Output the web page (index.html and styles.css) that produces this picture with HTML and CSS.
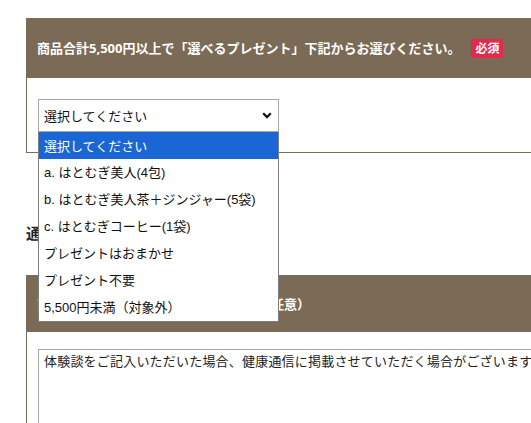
FILE: index.html
```html
<!DOCTYPE html>
<html lang="ja">
<head>
    <meta charset="UTF-8">
    <title>ご注文フォーム</title>
    <link rel="stylesheet" href="styles.css">
</head>
<body>
    <div class="page">
        <section class="field">
            <div class="field-head">
                商品合計5,500円以上で「選べるプレゼント」下記からお選びください。<span class="badge">必須</span>
            </div>
            <div class="field-body">
                <div class="picker">
                    <div class="picker-box">
                        <span>選択してください</span>
                        <svg class="chevron" width="10" height="7" viewBox="0 0 10 7">
                            <path d="M1.2 1.3 L5 5.1 L8.8 1.3" fill="none" stroke="#111" stroke-width="2.2"/>
                        </svg>
                    </div>
                    <!-- 開いた状態のプルダウン -->
                    <ul class="picker-list">
                        <li class="active">選択してください</li>
                        <li>a. はとむぎ美人(4包)</li>
                        <li>b. はとむぎ美人茶＋ジンジャー(5袋)</li>
                        <li>c. はとむぎコーヒー(1袋)</li>
                        <li>プレゼントはおまかせ</li>
                        <li>プレゼント不要</li>
                        <li>5,500円未満（対象外）</li>
                    </ul>
                </div>
            </div>
        </section>

        <h2 class="field-title">通信欄</h2>

        <section class="field">
            <div class="field-head field-head-low">商品の体験談をぜひお聞かせください（任意）</div>
            <div class="field-body field-body-text">
                <textarea class="comment">体験談をご記入いただいた場合、健康通信に掲載させていただく場合がございます</textarea>
            </div>
        </section>
    </div>
</body>
</html>
```

FILE: styles.css
```css
html, body {
    margin: 0;
    overflow: hidden;
    background: #fff;
}
.page {
    padding: 18px 0 0 26px;
    font-family: "Noto Sans", "Noto Sans CJK JP", sans-serif;
    color: #222;
}
.field {
    width: 620px;
    border: 1px solid #7a6a56;
    border-top: none;
}
.field-head {
    height: 60px;
    display: flex;
    align-items: center;
    padding-left: 10px;
    background-color: #7a6a56;
    color: #fff;
    font-size: 13px;
    font-weight: bold;
    line-height: 18px;
    white-space: nowrap;
}
.field-head-low {
    height: 57px;
}
.badge {
    margin-left: 11px;
    padding: 0 4px;
    height: 19px;
    line-height: 19px;
    font-size: 12px;
    background-color: #e2294f;
    border-radius: 2px;
}
.field-body {
    padding: 21px 11px 20px;
}
.field-body-text {
    padding: 17px 11px 10px;
}
.picker {
    position: relative;
    width: 241px;
    font-family: "Liberation Sans", "Noto Sans CJK JP", sans-serif;
    font-size: 13px;
}
.picker-box {
    box-sizing: border-box;
    height: 33px;
    display: flex;
    align-items: center;
    justify-content: space-between;
    padding: 0 6px 0 5px;
    border: 1px solid #a6a6a6;
    font-family: "Noto Sans CJK JP", sans-serif;
    color: #111;
}
.chevron {
    display: block;
}
.picker-list {
    position: absolute;
    top: 100%;
    left: 0;
    right: 0;
    margin: 0;
    padding: 0;
    list-style: none;
    background: #fff;
    border: 1px solid #7d7d7d;
    border-top: none;
    z-index: 2;
}
.picker-list li {
    height: 27px;
    line-height: 27px;
    padding-left: 5px;
    color: #111;
    white-space: nowrap;
}
.picker-list li.active {
    background-color: #1a66d4;
    color: #fff;
    font-family: "Noto Sans CJK JP", sans-serif;
}
.field-title {
    margin: 69px 0 31px;
    font-size: 15px;
    line-height: 22px;
    font-weight: bold;
    color: #222;
}
.comment {
    display: block;
    box-sizing: border-box;
    width: 600px;
    height: 140px;
    margin: 0;
    padding: 2px 5px;
    border: 1px solid #a6a6a6;
    font-family: "Noto Sans CJK JP", sans-serif;
    font-size: 13px;
    letter-spacing: 0.2px;
    line-height: 18px;
    color: #222;
    resize: none;
}
```
